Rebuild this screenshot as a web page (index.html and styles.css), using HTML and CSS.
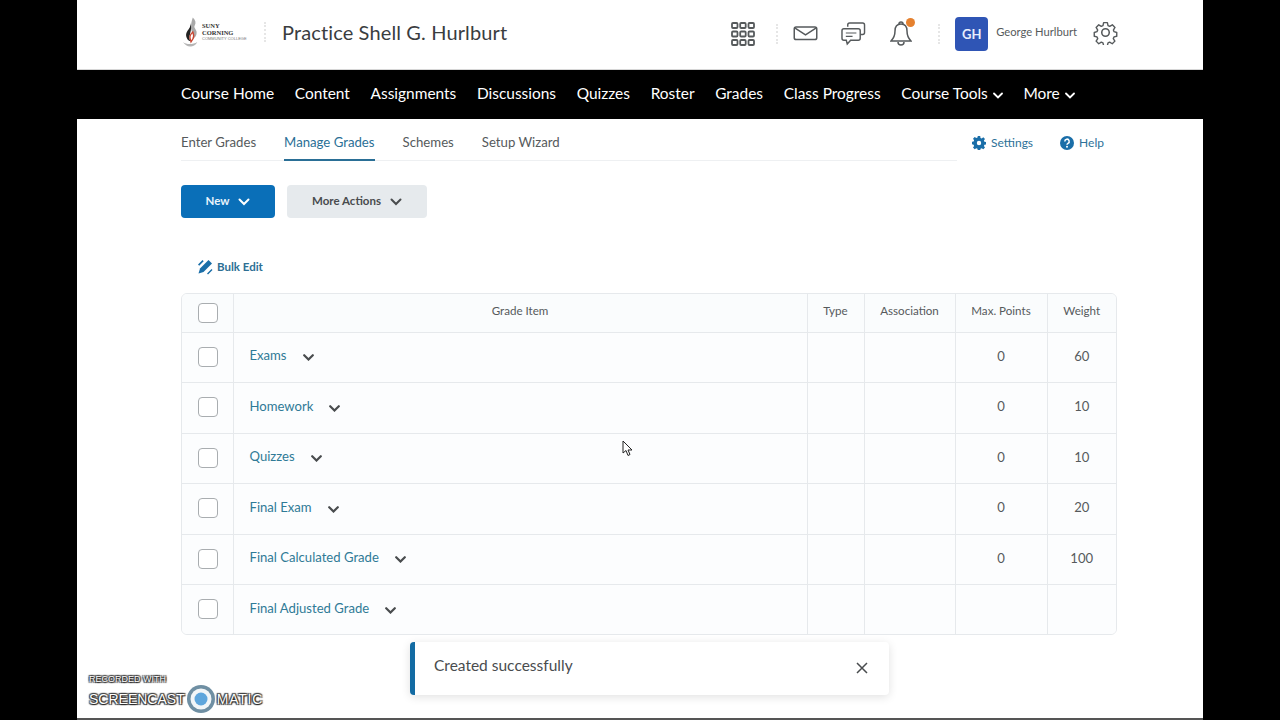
FILE: index.html
```html
<!DOCTYPE html>
<html lang="en">
<head>
    <meta charset="UTF-8">
    <meta name="viewport" content="width=device-width, initial-scale=1.0">
    <title>Manage Grades</title>
    <link rel="stylesheet" href="styles.css">
</head>
<body>
    <div class="page">
        <header class="top-bar">
            <div class="wrap top-inner">
                <div class="logo">
                    <svg class="logo-mark" width="18" height="34" viewBox="0 0 20 34">
                        <path d="M12 1c3 3 4 6 2 9-1 2 1 3 2 6 1 4-1 7-4 9 1-3 1-5-1-8-1-3-2-7 1-16z" fill="#a9a9a9"/>
                        <path d="M9 7c1 4-1 6-3 9-2 3-2 6 0 9 1 1 2 2 3 2-1-3-1-5 0-8 1-4 2-8 0-12z" fill="#222"/>
                        <path d="M9 24c-1-3 1-5 3-7 1 3 2 5 0 8l-2 3z" fill="none" stroke="#c8432f" stroke-width="1.4"/>
                        <path d="M1 28c4 3 11 3 16 0-2 4-5 5-8 5s-6-2-8-5z" fill="#b5b5b5"/>
                    </svg>
                    <div class="logo-text">
                        <span>SUNY</span>
                        <span>CORNING</span>
                        <span class="logo-small">COMMUNITY COLLEGE</span>
                    </div>
                </div>
                <div class="dots logo-dots"></div>
                <div class="course-title">Practice Shell G. Hurlburt</div>

                <div class="top-icons">
                    <svg class="icon-grid" width="24" height="24" viewBox="0 0 24 24" fill="none" stroke="#565a5c" stroke-width="1.8">
                        <rect x="1" y="1" width="5.5" height="5" rx="1"/><rect x="9.2" y="1" width="5.5" height="5" rx="1"/><rect x="17.5" y="1" width="5.5" height="5" rx="1"/>
                        <rect x="1" y="9.5" width="5.5" height="5" rx="1"/><rect x="9.2" y="9.5" width="5.5" height="5" rx="1"/><rect x="17.5" y="9.5" width="5.5" height="5" rx="1"/>
                        <rect x="1" y="18" width="5.5" height="5" rx="1"/><rect x="9.2" y="18" width="5.5" height="5" rx="1"/><rect x="17.5" y="18" width="5.5" height="5" rx="1"/>
                    </svg>
                    <div class="dots grid-dots"></div>
                    <svg class="icon-mail" width="25" height="15" viewBox="0 0 26 16" fill="none" stroke="#565a5c" stroke-width="1.6">
                        <rect x="1" y="1" width="24" height="13.5" rx="2"/>
                        <path d="M1.5 2l11.5 7.5L24.5 2"/>
                    </svg>
                    <svg class="icon-chat" width="25" height="24" viewBox="0 0 26 25" fill="none" stroke="#565a5c" stroke-width="1.5">
                        <path d="M7 5V3a2 2 0 0 1 2-2h13.5a2 2 0 0 1 2 2v8a2 2 0 0 1-2 2H20"/>
                        <path d="M3 7h15a2 2 0 0 1 2 2v8a2 2 0 0 1-2 2H10l-3.5 4-1-4H3a2 2 0 0 1-2-2V9a2 2 0 0 1 2-2z" fill="#fff"/>
                        <path d="M5 11.5h11M5 15h7" stroke-width="1.2"/>
                    </svg>
                    <div class="bell-box">
                        <svg width="22" height="25" viewBox="0 0 22 25" fill="none" stroke="#565a5c" stroke-width="1.5">
                            <path d="M11 3c-4 0-6 3-6 7 0 5-2 8-4 10h20c-2-2-4-5-4-10 0-4-2-7-6-7z"/>
                            <path d="M9 3a2 2 0 0 1 4 0M8 21a3 3 0 0 0 6 0"/>
                        </svg>
                        <span class="bell-dot"></span>
                    </div>
                    <div class="dots bell-dots"></div>
                    <div class="avatar">GH</div>
                    <div class="user-name">George Hurlburt</div>
                    <svg class="icon-gear" width="25" height="25" viewBox="0 0 24 24" fill="none" stroke="#565a5c" stroke-width="1.5" stroke-linejoin="round">
                        <circle cx="12" cy="12" r="3.6"/>
                        <path d="M10 1.5h4l.7 3.2 1.8.8 2.8-1.7 2.8 2.8-1.7 2.8.7 1.7 2.9.9v4l-2.9.7-.8 1.8 1.7 2.7-2.8 2.8-2.8-1.7-1.7.8-.7 2.9h-4l-.7-2.9-1.8-.8-2.7 1.7-2.8-2.8 1.7-2.7-.8-1.8-2.9-.7v-4l2.9-.9.8-1.7-1.7-2.8 2.8-2.8 2.7 1.7 1.8-.8z" transform="translate(1.2 1.2) scale(.9)"/>
                    </svg>
                </div>
            </div>
        </header>

        <nav class="main-nav">
            <div class="wrap nav-inner">
                <a href="#">Course Home</a>
                <a href="#">Content</a>
                <a href="#">Assignments</a>
                <a href="#">Discussions</a>
                <a href="#">Quizzes</a>
                <a href="#">Roster</a>
                <a href="#">Grades</a>
                <a href="#">Class Progress</a>
                <a href="#">Course Tools <svg class="chev" width="10" height="7" viewBox="0 0 10 7"><path d="M1 1.5l4 4 4-4" fill="none" stroke="#fff" stroke-width="1.8" stroke-linecap="round"/></svg></a>
                <a href="#">More <svg class="chev" width="10" height="7" viewBox="0 0 10 7"><path d="M1 1.5l4 4 4-4" fill="none" stroke="#fff" stroke-width="1.8" stroke-linecap="round"/></svg></a>
            </div>
        </nav>

        <main class="wrap">
            <div class="tabs-row">
                <div class="tabs">
                    <a href="#">Enter Grades</a>
                    <a href="#" class="active">Manage Grades</a>
                    <a href="#">Schemes</a>
                    <a href="#">Setup Wizard</a>
                </div>
                <div class="tab-links">
                    <a href="#">
                        <svg width="14" height="14" viewBox="0 0 14 14"><path fill="#1a6ea8" fill-rule="evenodd" d="M5.8 0h2.4l.3 1.9 1.2.5 1.6-1.1 1.7 1.7-1.1 1.6.5 1.2 1.9.3v2.4l-1.9.3-.5 1.2 1.1 1.6-1.7 1.7-1.6-1.1-1.2.5-.3 1.9H5.8l-.3-1.900-1.200-.5-1.600 1.100-1.700-1.700 1.100-1.600-.5-1.200L0 8.200V5.800l1.600-.3.5-1.200L1 2.700 2.700 1l1.600 1.100 1.200-.5zM7 4.800a2.200 2.200 0 1 0 0 4.400 2.200 2.200 0 0 0 0-4.400z"/></svg>
                        Settings
                    </a>
                    <a href="#">
                        <svg width="14" height="14" viewBox="0 0 14 14"><circle cx="7" cy="7" r="7" fill="#1a6ea8"/><path d="M4.8 5.400A2.200 2.200 0 1 1 8 7.300c-.7.400-1 .7-1 1.500" fill="none" stroke="#fff" stroke-width="1.5"/><circle cx="7" cy="10.800" r="1" fill="#fff"/></svg>
                        Help
                    </a>
                </div>
            </div>

            <div class="actions">
                <button class="btn btn-primary">New <svg width="12" height="8" viewBox="0 0 12 8"><path d="M1.5 1.500L6 6l4.500-4.500" fill="none" stroke="#fff" stroke-width="2" stroke-linecap="round"/></svg></button>
                <button class="btn btn-grey">More Actions <svg width="12" height="8" viewBox="0 0 12 8"><path d="M1.5 1.500L6 6l4.500-4.500" fill="none" stroke="#494c4e" stroke-width="2" stroke-linecap="round"/></svg></button>
            </div>

            <a href="#" class="bulk-edit">
                <svg width="16" height="16" viewBox="0 0 16 16" fill="#1a6ea8">
                    <path d="M11.5 1l3.500 3.500-8.500 8.500-5 1.500 1.500-5z"/>
                    <path d="M1 5.500L5.500 1l1.200 1.200-4.500 4.500zM10 14.500l4.500-4.500 1 1-4.500 4.500z"/>
                </svg>
                Bulk Edit
            </a>

            <div class="table-box">
                <table class="grades">
                    <colgroup>
                        <col class="col-check"><col class="col-item"><col class="col-type"><col class="col-assoc"><col class="col-max"><col class="col-weight">
                    </colgroup>
                    <thead>
                        <tr>
                            <th><span class="check"></span></th>
                            <th>Grade Item</th>
                            <th>Type</th>
                            <th>Association</th>
                            <th>Max. Points</th>
                            <th>Weight</th>
                        </tr>
                    </thead>
                    <tbody>
                        <tr>
                            <td><span class="check"></span></td>
                            <td class="item"><a href="#">Exams</a><svg class="row-chev" width="11" height="7" viewBox="0 0 11 7"><path d="M1.2 1.200l4.300 4.300 4.300-4.300" fill="none" stroke="#494c4e" stroke-width="2.200" stroke-linecap="round"/></svg></td>
                            <td></td><td></td><td>0</td><td>60</td>
                        </tr>
                        <tr>
                            <td><span class="check"></span></td>
                            <td class="item"><a href="#">Homework</a><svg class="row-chev" width="11" height="7" viewBox="0 0 11 7"><path d="M1.2 1.200l4.300 4.300 4.300-4.300" fill="none" stroke="#494c4e" stroke-width="2.200" stroke-linecap="round"/></svg></td>
                            <td></td><td></td><td>0</td><td>10</td>
                        </tr>
                        <tr>
                            <td><span class="check"></span></td>
                            <td class="item"><a href="#">Quizzes</a><svg class="row-chev" width="11" height="7" viewBox="0 0 11 7"><path d="M1.2 1.200l4.300 4.300 4.300-4.300" fill="none" stroke="#494c4e" stroke-width="2.200" stroke-linecap="round"/></svg></td>
                            <td></td><td></td><td>0</td><td>10</td>
                        </tr>
                        <tr>
                            <td><span class="check"></span></td>
                            <td class="item"><a href="#">Final Exam</a><svg class="row-chev" width="11" height="7" viewBox="0 0 11 7"><path d="M1.2 1.200l4.300 4.300 4.300-4.300" fill="none" stroke="#494c4e" stroke-width="2.200" stroke-linecap="round"/></svg></td>
                            <td></td><td></td><td>0</td><td>20</td>
                        </tr>
                        <tr>
                            <td><span class="check"></span></td>
                            <td class="item"><a href="#">Final Calculated Grade</a><svg class="row-chev" width="11" height="7" viewBox="0 0 11 7"><path d="M1.2 1.200l4.300 4.300 4.300-4.300" fill="none" stroke="#494c4e" stroke-width="2.200" stroke-linecap="round"/></svg></td>
                            <td></td><td></td><td>0</td><td>100</td>
                        </tr>
                        <tr>
                            <td><span class="check"></span></td>
                            <td class="item"><a href="#">Final Adjusted Grade</a><svg class="row-chev" width="11" height="7" viewBox="0 0 11 7"><path d="M1.2 1.200l4.300 4.300 4.300-4.300" fill="none" stroke="#494c4e" stroke-width="2.200" stroke-linecap="round"/></svg></td>
                            <td></td><td></td><td></td><td></td>
                        </tr>
                    </tbody>
                </table>
            </div>
        </main>

        <!-- toast sits over the page -->
        <div class="toast">
            <span>Created successfully</span>
            <svg width="12" height="12" viewBox="0 0 12 12"><path d="M1 1l10 10M11 1L1 11" stroke="#494c4e" stroke-width="1.5" fill="none"/></svg>
        </div>

        <svg class="cursor" width="11" height="17" viewBox="0 0 11 17"><path d="M1 1v12l3-2.500 2 5 2-1-2-4.500h4z" fill="#fff" stroke="#222" stroke-width="1"/></svg>
    </div>

    <div class="watermark">
        <div class="wm-top">RECORDED WITH</div>
        <div class="wm-row">
            <span>SCREENCAST</span>
            <svg width="30" height="30" viewBox="0 0 30 30">
                <circle cx="15" cy="15" r="14" fill="#6f8fa3"/>
                <circle cx="15" cy="15" r="10.5" fill="#f2f6f8"/>
                <circle cx="15" cy="15" r="6.5" fill="#5fa6dc"/>
            </svg>
            <span class="wm-matic">MATIC</span>
        </div>
    </div>
</body>
</html>
```

FILE: styles.css
```css
* {
    box-sizing: border-box;
}

html, body {
    margin: 0;
    height: 720px;
    overflow: hidden;
    background-color: #000;
}

body {
    font-family: 'Lato', sans-serif;
    color: #494c4e;
    position: relative;
}

a {
    text-decoration: none;
}

/* White page area, black bars either side */
.page {
    position: relative;
    width: 1126px;
    height: 720px;
    margin-left: 77px;
    background-color: #fff;
    border-bottom: 2px solid #555;
}

.wrap {
    width: 936px;
    margin-left: 104px;
}

/* Top header */
.top-bar {
    height: 70px;
    border-bottom: 1px solid #d6d6d6;
}

.top-inner {
    display: flex;
    align-items: center;
    height: 69px;
    padding-bottom: 5px;
}

.logo {
    display: flex;
    align-items: center;
    width: 67px;
    margin-left: 1px;
    gap: 2px;
}

.logo-text {
    display: flex;
    flex-direction: column;
    font-family: 'Liberation Serif', serif;
    font-size: 6.5px;
    font-weight: 700;
    line-height: 7px;
    color: #333;
}

.logo-small {
    font-family: 'Liberation Sans', sans-serif;
    font-size: 4px;
    font-weight: 400;
    line-height: 6px;
    white-space: nowrap;
    color: #777;
}

.dots {
    width: 2px;
    height: 20px;
    border-left: 2px dotted #e6e6e6;
}

.logo-dots {
    margin-left: 15px;
}

.course-title {
    margin-left: 16px;
    font-size: 20px;
    color: #3a3d3f;
    letter-spacing: 0.13px;
    white-space: nowrap;
}

.top-icons {
    display: flex;
    align-items: center;
    margin-top: 3px;
    margin-left: auto;
    margin-right: -1px;
}

.grid-dots {
    margin-left: 21px;
}

.icon-mail {
    margin-left: 15px;
}

.icon-chat {
    margin-left: 23px;
}

.bell-box {
    position: relative;
    display: flex;
    margin-left: 24px;
}

.bell-dot {
    position: absolute;
    top: -3px;
    right: -3px;
    width: 9px;
    height: 9px;
    border-radius: 50%;
    background-color: #e5812f;
}

.bell-dots {
    margin-left: 26px;
}

.avatar {
    display: flex;
    align-items: center;
    justify-content: center;
    width: 33px;
    height: 34px;
    margin-left: 15px;
    border-radius: 4px;
    background-color: #2f55b5;
    color: #e8eefc;
    font-size: 13px;
    font-weight: 700;
}

.user-name {
    margin-left: 8px;
    margin-top: -5px;
    font-size: 11.2px;
    color: #565a5c;
    white-space: nowrap;
}

.icon-gear {
    margin-left: 16px;
    margin-top: -2px;
}

/* Black course nav */
.main-nav {
    height: 49px;
    background-color: #000;
}

.nav-inner {
    display: flex;
    align-items: center;
    height: 49px;
    padding-bottom: 4px;
    gap: 20.7px;
}

.nav-inner a {
    color: #fff;
    font-size: 15.45px;
    white-space: nowrap;
}

.chev {
    margin-left: 1px;
    vertical-align: 0;
}

/* Tabs */
.tabs-row {
    display: flex;
    height: 42px;
}

.tabs {
    display: flex;
    gap: 28px;
    width: 776px;
    height: 42px;
    border-bottom: 1px solid #eef0f2;
}

.tabs a {
    position: relative;
    padding-top: 15px;
    font-size: 13.2px;
    line-height: 16px;
    color: #565a5c;
}

.tabs a.active {
    color: #2a6f96;
    border-bottom: 2px solid #2a6f96;
    height: 42px;
}

.tab-links {
    display: flex;
    gap: 27px;
    margin-left: 15px;
    padding-top: 16px;
}

.tab-links a {
    display: flex;
    align-items: flex-start;
    gap: 5px;
    font-size: 12px;
    line-height: 16px;
    color: #2d7198;
}

.tab-links svg {
    margin-top: 1px;
}

/* Action buttons */
.actions {
    display: flex;
    gap: 12px;
    margin-top: 24px;
}

.btn {
    display: flex;
    align-items: center;
    justify-content: center;
    gap: 9px;
    height: 33px;
    padding: 0 0 2px;
    border: none;
    border-radius: 4px;
    font-family: 'Lato', sans-serif;
    font-size: 11.5px;
    font-weight: 700;
}

.btn svg {
    margin-top: 2px;
}

.btn-primary {
    width: 94px;
    background-color: #0a6fb8;
    color: #e8f3fb;
}

.btn-grey {
    width: 140px;
    background-color: #e6eaed;
    color: #494c4e;
}

.bulk-edit {
    display: flex;
    align-items: center;
    gap: 4px;
    width: max-content;
    margin-top: 41px;
    margin-left: 16px;
    font-size: 11.5px;
    font-weight: 700;
    line-height: 16px;
    color: #2d6f94;
}

/* Grades table */
.table-box {
    height: 342px;
    margin-top: 18px;
    border: 1px solid #e6e9ec;
    border-radius: 6px;
    overflow: hidden;
}

.grades {
    width: 100%;
    table-layout: fixed;
    border-collapse: collapse;
    font-size: 11.6px;
}

.col-check { width: 51px; }
.col-type { width: 57px; }
.col-assoc { width: 91px; }
.col-max { width: 92px; }
.col-weight { width: 69px; }

.grades th {
    height: 38px;
    padding: 0 0 4px;
    background-color: #fafcfd;
    border-bottom: 1px solid #e6e9ec;
    border-left: 1px solid #e6e9ec;
    font-weight: 400;
    color: #565a5c;
    text-align: center;
}

.grades th .check {
    position: relative;
    top: 2px;
}

.grades td {
    height: 50.5px;
    padding: 0 0 2px;
    border-bottom: 1px solid #e6e9ec;
    border-left: 1px solid #e6e9ec;
    background-color: #fcfdfe;
    font-size: 13.1px;
    color: #565a5c;
    text-align: center;
}

.grades td:nth-child(n+5) {
    padding-bottom: 3px;
}

.grades tr > :first-child {
    border-left: none;
}

.grades tbody tr:last-child td {
    height: 50px;
    border-bottom: none;
}

.check {
    display: block;
    width: 20px;
    height: 20px;
    margin: 1px 0 0 16px;
    border: 1px solid #a9adb0;
    border-radius: 4px;
    background-color: #fff;
}

.grades td.item {
    padding-left: 16px;
    text-align: left;
    white-space: nowrap;
}

.item a {
    color: #2f7a96;
    position: relative;
    top: -1px;
}

.row-chev {
    margin-left: 16px;
}

/* Toast */
.toast {
    position: absolute;
    left: 333px;
    top: 642px;
    display: flex;
    align-items: center;
    justify-content: space-between;
    width: 479px;
    height: 53px;
    padding: 0 21px 7px 19px;
    border-left: 5px solid #136ba3;
    border-radius: 4px;
    background-color: #fff;
    box-shadow: 0 2px 10px rgba(0, 0, 0, 0.12);
    font-size: 15.5px;
    color: #494c4e;
}

.toast svg {
    margin-top: 5px;
}

.cursor {
    position: absolute;
    left: 545px;
    top: 440px;
}

/* Recorder watermark, over everything */
.watermark {
    position: absolute;
    left: 89px;
    top: 673px;
    color: #fff;
    font-family: 'Liberation Sans', sans-serif;
    text-shadow: 0 0 1px #222, 1px 1px 1px #222, -1px -1px 1px #444, 1px -1px 1px #444, -1px 1px 1px #444;
}

.wm-top {
    font-size: 9px;
    line-height: 12px;
    white-space: nowrap;
}

.wm-row {
    display: flex;
    align-items: center;
    gap: 1px;
    margin-top: -1px;
    font-size: 14px;
    white-space: nowrap;
}

.wm-matic {
    letter-spacing: 0.8px;
}
```
